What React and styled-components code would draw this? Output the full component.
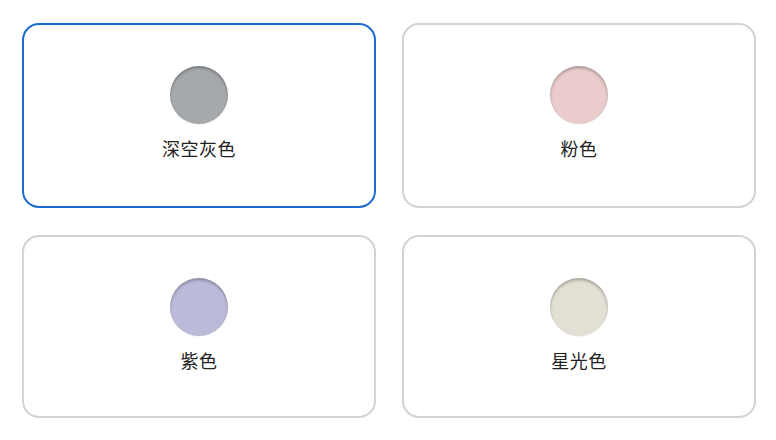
import React, { useState } from "react";
import styled, { createGlobalStyle } from "styled-components";

const Global = createGlobalStyle`
  html, body { margin: 0; padding: 0; background: #ffffff; }
  body { font-family: "Noto Sans CJK SC", "Noto Sans", sans-serif; }
`;

const Grid = styled.div`
  display: grid;
  grid-template-columns: 354px 354px;
  grid-template-rows: 185px 183px;
  column-gap: 26px;
  row-gap: 27px;
  padding: 23px 20px 0 22px;
`;

const Card = styled.button`
  box-sizing: border-box;
  display: flex;
  flex-direction: column;
  align-items: center;
  justify-content: flex-start;
  padding: 41px 0 0;
  background: #ffffff;
  border: 2px solid ${(p) => (p.$selected ? "#1c6cd0" : "#d3d3d3")};
  border-radius: 17px;
  cursor: pointer;
  font: inherit;
  margin: 0;
`;

const Swatch = styled.span`
  display: block;
  width: 58px;
  height: 58px;
  border-radius: 50%;
  background: ${(p) => p.$color};
  box-shadow: inset 0 2px 3px rgba(0, 0, 0, 0.28), 0 1px 1px rgba(0, 0, 0, 0.04);
`;

const Label = styled.span`
  margin-top: 11px;
  font-size: 18px;
  line-height: 26px;
  color: #222222;
  letter-spacing: 0.5px;
`;

const colors = [
  { name: "深空灰色", color: "#a6a9ac" },
  { name: "粉色", color: "#e9cccb" },
  { name: "紫色", color: "#bbbad9" },
  { name: "星光色", color: "#e4dfd4" },
];

export default function App() {
  const [selected, setSelected] = useState(0);
  return (
    <>
      <Global />
      <Grid>
        {colors.map((c, i) => (
          <Card key={c.name} $selected={selected === i} onClick={() => setSelected(i)}>
            <Swatch $color={c.color} />
            <Label>{c.name}</Label>
          </Card>
        ))}
      </Grid>
    </>
  );
}
